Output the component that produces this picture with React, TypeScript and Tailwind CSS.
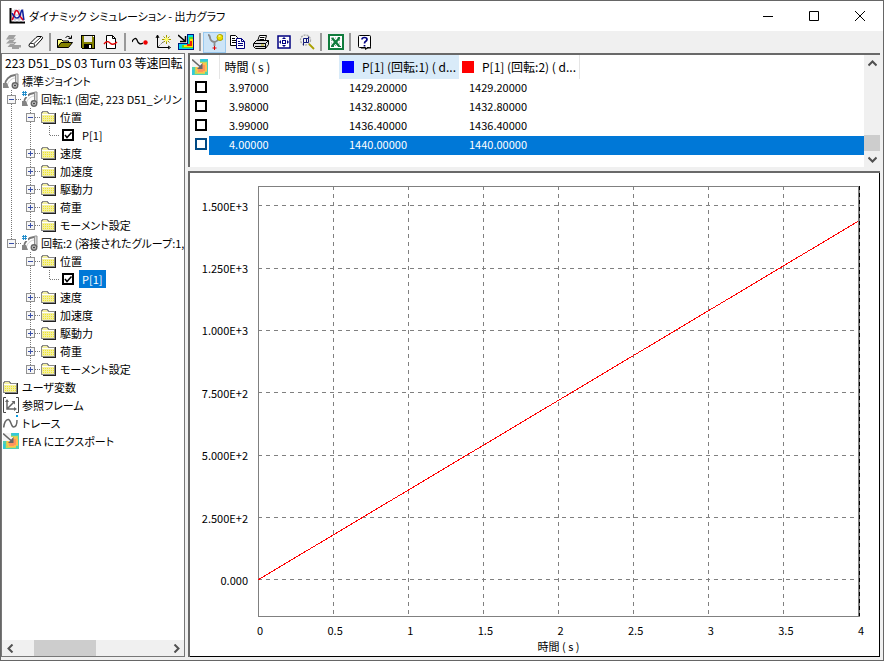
import { useState } from "react";
import type { ReactNode } from "react";
import clsx from "clsx";

type Guide = "none" | "line" | "plus" | "minus" | "plusEnd" | "minusEnd" | "elbow";
type IconName = "folder" | "joint" | "jointHash" | "frame" | "trace" | "fea";

interface TreeRow {
  guides: Guide[];
  icon?: IconName;
  label: string;
  check?: string;
}

const folders = ["速度", "加速度", "駆動力", "荷重"];

const buildJoint = (id: string, label: string, outer: Guide, own: Guide): TreeRow[] => [
  { guides: [own], icon: "jointHash", label },
  { guides: [outer, "minus"], icon: "folder", label: "位置" },
  { guides: [outer, "line", "elbow"], label: "P[1]", check: id },
  ...folders.map((f): TreeRow => ({ guides: [outer, "plus"], icon: "folder", label: f })),
  { guides: [outer, "plusEnd"], icon: "folder", label: "モーメント設定" },
];

const tree: TreeRow[] = [
  { guides: [], icon: "joint", label: "標準ジョイント" },
  ...buildJoint("p1", "回転:1 (固定, 223 D51_シリン", "line", "minus"),
  ...buildJoint("p2", "回転:2 (溶接されたグループ:1,", "none", "minusEnd"),
  { guides: [], icon: "folder", label: "ユーザ変数" },
  { guides: [], icon: "frame", label: "参照フレーム" },
  { guides: [], icon: "trace", label: "トレース" },
  { guides: [], icon: "fea", label: "FEA にエクスポート" },
];

const rows = [
  ["3.97000", "1429.20000", "1429.20000"],
  ["3.98000", "1432.80000", "1432.80000"],
  ["3.99000", "1436.40000", "1436.40000"],
  ["4.00000", "1440.00000", "1440.00000"],
];

const xTicks = ["0", "0.5", "1", "1.5", "2", "2.5", "3", "3.5", "4"];
const yTicks = ["0.000", "2.500E+2", "5.000E+2", "7.500E+2", "1.000E+3", "1.250E+3", "1.500E+3"];

// value -> percentage of the plot height
const yPos = (v: number) => 91.6 - (v / 250) * 14.5;

function Px({ children, w = 16 }: { children: ReactNode; w?: number }) {
  return (
    <svg width={w} height={16} viewBox={`0 0 ${w} 16`} fill="none" className="shrink-0" aria-hidden="true">
      {children}
    </svg>
  );
}

function HeatIcon() {
  return (
    <Px>
      <g shapeRendering="crispEdges">
        <path d="M0 0h16v16H0z" fill="#4fd0b4" />
        <path d="M9 0h7v2H9zM0 11h2v5H0z" fill="#32c8dc" />
        <path d="M6 3h9v10h-2v2H3V8h3z" fill="#c4d85a" />
        <path d="M7 4h7v2h1v6h-2v2H5v-2H4V8h3z" fill="#ffc04a" />
        <path d="M8 6h5v6h-2v1H6V9h2z" fill="#ff945e" />
        <path d="M0 0h8v4h2v5H6V8H0z" fill="#f4f4f4" />
      </g>
      <path d="M0 .5l8 7" stroke="#666" strokeWidth="1.600" />
      <path d="M10.500 10V4L5 10z" fill="#666" />
    </Px>
  );
}

function TreeIcon({ name }: { name: IconName }) {
  if (name === "fea") return <HeatIcon />;
  if (name === "folder")
    return (
      <Px>
        <g shapeRendering="crispEdges">
          <path d="M2 14h12V4h1v11H2z" fill="#222" />
          <path d="M.5 4.500l1-2h5l1 2h6v9H.5z" fill="#f3efa2" stroke="#8a8a8a" />
          <path d="M1 5.500h12" stroke="#fff" />
          <path d="M2 7.500h11M2 9.500h11M2 11.500h11" stroke="#f0e630" strokeDasharray="1 1" />
        </g>
      </Px>
    );
  if (name === "frame")
    return (
      <Px>
        <path d="M3 .5H.5v15H3M13 .5h2.500v15H13" stroke="#444" />
        <path d="M4 3v9h8M4 12l7-7" stroke="#666" strokeWidth="1.500" />
        <path d="M2 5l2-3 2 3zM11 10l3 2-3 2zM8.500 4H12v3.500z" fill="#666" />
      </Px>
    );
  if (name === "trace")
    return (
      <Px>
        <path d="M.7 12.500C1 8 3 4 5.500 4.500S8 12 10.500 12 14 8 14 5" stroke="#666" strokeWidth="1.500" />
        <path d="M13 0h2v2h-2z" fill="#0a9be0" />
      </Px>
    );
  return (
    <Px>
      <path d="M2 12C2 7 6 2.500 12 2" stroke="#777" strokeWidth="1.800" />
      <path d="M4.500 12C5 9 8 5.500 12 5" stroke="#d0d0d0" />
      <path d="M12.500 1h2.500v11h-2.500z" fill="#d8d8d8" stroke="#909090" />
      <path d="M0 10h4l2 5H0z" fill="#858585" />
      <circle cx="12" cy="12.500" r="2.700" fill="#ccc" stroke="#666" strokeWidth="1.500" />
      <path d="M12 11.500v2M11 12.500h2" stroke="#444" />
      {name === "jointHash" && (
        <>
          <path d="M0 0h6v6H0z" fill="#fff" />
          <path d="M1.500 0v5M3.500 0v5M0 1.500h5M0 3.500h5" stroke="#1687c8" strokeWidth="0.900" />
        </>
      )}
    </Px>
  );
}

function GuideCell({ kind }: { kind: Guide }) {
  const box = kind.startsWith("plus") || kind.startsWith("minus");
  const end = kind.endsWith("End") || kind === "elbow";
  const art = (
    <svg width={19} height={18} fill="none" shapeRendering="crispEdges" className="block" aria-hidden="true">
      {kind !== "none" && (
        <path d={end ? "M9.500 0v10" : "M9.500 0v18"} stroke="#777" strokeDasharray="1 1" />
      )}
      {kind !== "none" && kind !== "line" && <path d="M10 9.500h9" stroke="#777" strokeDasharray="1 1" />}
      {box && (
        <>
          <rect x="5.500" y="5.500" width="8" height="8" fill="#f6f6f6" stroke="#919191" />
          <path d="M7 9.500h5" stroke="#3a50a8" />
          {kind.startsWith("plus") && <path d="M9.500 7v5" stroke="#3a50a8" />}
        </>
      )}
    </svg>
  );
  return box ? (
    <button type="button" className="shrink-0" aria-label="展開">
      {art}
    </button>
  ) : (
    <span className="shrink-0">{art}</span>
  );
}

function Check({ id, checked, onChange, light }: { id: string; checked: boolean; onChange: () => void; light?: boolean }) {
  return (
    <span className="relative block size-3 shrink-0">
      <input
        id={id}
        type="checkbox"
        checked={checked}
        onChange={onChange}
        aria-label={id}
        className={clsx("block size-3 appearance-none border-2 bg-white", light ? "border-[#004a84]" : "border-black")}
      />
      {checked && (
        <svg viewBox="0 0 12 12" className="pointer-events-none absolute inset-0 size-3" fill="none">
          <path d="M3 6l2 2.500L9.500 3.500" stroke="#000" strokeWidth="1.500" />
        </svg>
      )}
    </span>
  );
}

const toolGroups: { label: string; art: ReactNode; active?: boolean }[][] = [
  [
    {
      label: "更新",
      art: (
        <Px>
          <path d="M4 1h7L8.500 4.500H11L8 8h3.500L9 11h7v2.500h-2V15H7v-2H2.500l3-3.500H1l4-4H1z" fill="#a0a0a0" />
          <path d="M5 5.500h4M5 9.500h4" stroke="#c8c8c8" />
        </Px>
      ),
    },
    {
      label: "消去",
      art: (
        <Px>
          <path d="M1.500 10L8 3.500q1-1 2-1h3.500q2 .5 .5 2.500l-6 6.500q-1 1.500-2.500 1.500H3q-3 0-1.500-3z" fill="#fff" stroke="#000" />
          <path d="M2 9.500h3q2 0 1.500 3M6 9.500L13 3" stroke="#333" />
        </Px>
      ),
    },
  ],
  [
    {
      label: "開く",
      art: (
        <Px>
          <path d="M.5 13.500v-8h4L6 7h5.500v2" fill="#ffff80" stroke="#000" />
          <path d="M.5 13.500l3.500-5h11.500l-4 5z" fill="#848200" stroke="#000" />
          <path d="M8.500 3.500q2-2.500 5 0M14.500 1.500v3h-3" stroke="#000" />
        </Px>
      ),
    },
    {
      label: "保存",
      art: (
        <Px>
          <g shapeRendering="crispEdges">
            <path d="M1.500 1.500h13v13h-12l-1-1z" fill="#848200" stroke="#000" />
            <path d="M4 2h8v6H4z" fill="#e8e8e8" />
            <path d="M4 10h8v5H4z" fill="#000" />
            <path d="M9 11h2v3H9zM13 2h1v1h-1z" fill="#fff" />
          </g>
        </Px>
      ),
    },
    {
      label: "ページ",
      art: (
        <Px>
          <path d="M3.500 1.500h6l3 3v10h-9z" fill="#fff" stroke="#000" />
          <path d="M9.500 1.500v3h3" stroke="#000" />
          <path d="M1 10q3-4 6-1t7-1" stroke="#e00000" strokeWidth="1.300" />
        </Px>
      ),
    },
  ],
  [
    {
      label: "曲線",
      art: (
        <Px>
          <path d="M0 8c1-3 4-5 5-2s3 5 6 3" stroke="#000" strokeWidth="1.300" />
          <circle cx="13.500" cy="8.500" r="2.200" fill="#f00000" />
        </Px>
      ),
    },
    {
      label: "座標",
      art: (
        <Px>
          <path d="M2.500 2v11.500H14M1 4l1.500-3L4 4M13 12l2.500 1.500L13 15" stroke="#000" />
          <path d="M3 13l6-6" stroke="#444" strokeDasharray="1 1" />
          <path d="M11.500 1v9M7 5.500h9M8.500 2.500l6 6M14.500 2.500l-6 6" stroke="#a09800" />
          <circle cx="11.500" cy="5.500" r="2" fill="#ffff60" />
        </Px>
      ),
    },
    {
      label: "FEA",
      art: (
        <Px>
          <g shapeRendering="crispEdges">
            <path d="M9 0h7v16H0V9h9z" fill="#001880" />
            <path d="M10 1h5v14H1v-5h9z" fill="#00d8e8" />
            <path d="M11 3h4v11H4v-3h7z" fill="#60d820" />
            <path d="M12 5h3v8H6v-2h6z" fill="#ffe000" />
            <path d="M12 7h2v5H9v-2h3z" fill="#f02000" />
          </g>
          <path d="M0 1l7 6M7.500 2v5.500H2" stroke="#000" strokeWidth="1.500" />
        </Px>
      ),
    },
  ],
  [
    {
      label: "連結",
      active: true,
      art: (
        <Px>
          <path d="M1 1q2 0 2 3 1 4 5 4 3-1 4-4M7.500 7v5" stroke="#8a8a8a" strokeWidth="1.800" />
          <circle cx="13" cy="3.500" r="3" fill="#ece000" stroke="#a8a000" />
          <path d="M11.500 2h2" stroke="#fff" />
          <path d="M7.500 12v4M5.500 14h4" stroke="#e00000" />
        </Px>
      ),
    },
    {
      label: "コピー",
      art: (
        <Px>
          <path d="M.5 1.500h5l2 2v8h-7z" fill="#fff" stroke="#000" />
          <path d="M2 4.500h3M2 6.500h4M2 8.500h4" stroke="#000" />
          <path d="M6.500 4.500h5l3 3v7h-8z" fill="#fff" stroke="#000080" />
          <path d="M11.500 4.500v3h3M8 7.500h2M8 9.500h5M8 11.500h5" stroke="#000080" />
        </Px>
      ),
    },
    {
      label: "印刷",
      art: (
        <Px>
          <path d="M4.500 7l2-5.500h7L12 7" fill="#fff" stroke="#000" />
          <path d="M7 3.500h4.500M6.500 5.500H11" stroke="#000" />
          <path d="M.5 9.500l3-3h12v4l-3 4H2.500l-2-2z" fill="#ddd" stroke="#000" />
          <path d="M1 9.500h11.500l3-3M12.500 9.500v5M2 12.500h10" stroke="#000" />
          <path d="M8 11h3" stroke="#c0b800" />
        </Px>
      ),
    },
    {
      label: "全体表示",
      art: (
        <Px>
          <path d="M2 2h12v12H2z" fill="#fff" stroke="#000080" strokeWidth="1.500" />
          <path d="M8 3l2 2H6zM8 13l2-2H6zM3 8l2-2v4zM13 8l-2-2v4z" fill="#000080" />
          <rect x="6.500" y="6.500" width="3" height="3" stroke="#000080" />
        </Px>
      ),
    },
    {
      label: "拡大",
      art: (
        <Px>
          <circle cx="6.500" cy="6" r="5" stroke="#aaa" strokeWidth="1.300" strokeDasharray="2 1" />
          <path d="M4.500 4.500h5v4h-5zM4.500 8.500v3M9.500 4.500v-2M7.500 4.500v4" stroke="#101878" />
          <path d="M10 10l5 5" stroke="#aaa000" strokeWidth="1.800" />
        </Px>
      ),
    },
  ],
  [
    {
      label: "Excel",
      art: (
        <Px>
          <rect x="1" y="1" width="14" height="14" fill="#fff" stroke="#107c3c" strokeWidth="2" />
          <path d="M3 4h10M3 6.500h10M3 9h10M3 11.500h10" stroke="#8aa898" strokeDasharray="1 1" />
          <path d="M4 4l7 8M11.500 4L4 12" stroke="#107c3c" strokeWidth="2.400" />
          <path d="M12 3.500h-2M3 12.500h3M10 12.500h3" stroke="#107c3c" />
        </Px>
      ),
    },
  ],
  [
    {
      label: "ヘルプ",
      art: (
        <Px>
          <path d="M3 2.500h11v12h-3l-2 1v-1H4z" fill="#000" />
          <path d="M1.500 2.500q0-1 1-1h10q1 0 1 1v10q0 1-1 1H10l-1.500 2v-2h-6q-1 0-1-1z" fill="#fff" stroke="#000" />
          <path d="M5 5.500q0-2 2.500-2t2.500 2q0 1-1.500 2-1 .5-1 2M7.500 11v1.500" stroke="#000080" strokeWidth="1.700" />
        </Px>
      ),
    },
  ],
];

function Chevron({ d, label }: { d: string; label: string }) {
  return (
    <button type="button" aria-label={label} className="grid size-4 shrink-0 place-items-center">
      <svg width={9} height={9} viewBox="0 0 9 9" fill="none">
        <path d={d} stroke="#505050" strokeWidth="2" />
      </svg>
    </button>
  );
}

function Chart() {
  return (
    <div className="min-h-0 flex-1 border-r border-b border-black bg-white pt-[13px] pr-5 pb-10 pl-17">
      <svg width="100%" height="100%" className="block overflow-visible text-[11px]" fill="#000">
        <rect width="100%" height="100%" fill="none" stroke="#808080" shapeRendering="crispEdges" />
        {xTicks.map((t, i) => (
          <g key={t}>
            {i > 0 && i < 8 && (
              <line x1={`${i * 12.5}%`} x2={`${i * 12.5}%`} y1="0" y2="100%" stroke="#808080" strokeDasharray="4 4" shapeRendering="crispEdges" />
            )}
            <text x={`${i * 12.5}%`} y="100%" dx="2" dy="19" textAnchor="middle">
              {t}
            </text>
          </g>
        ))}
        {yTicks.map((t, i) => (
          <g key={t}>
            <line x1="0" x2="100%" y1={`${yPos(i * 250)}%`} y2={`${yPos(i * 250)}%`} stroke="#808080" strokeDasharray="4 4" shapeRendering="crispEdges" />
            <text x="0" y={`${yPos(i * 250)}%`} dx="-10" dy="5" textAnchor="end">
              {t}
            </text>
          </g>
        ))}
        <line x1="0" y1={`${yPos(0)}%`} x2="100%" y2={`${yPos(1440)}%`} stroke="#f00" shapeRendering="crispEdges" />
        <line x1="100%" x2="100%" y1="0" y2="100%" stroke="#808080" strokeWidth="2" shapeRendering="crispEdges" />
        <line x1="100%" x2="100%" y1="0" y2="100%" stroke="#000" strokeDasharray="4 3" shapeRendering="crispEdges" />
        <text x="50%" y="100%" dy="35" textAnchor="middle">
          時間 ( s )
        </text>
      </svg>
    </div>
  );
}

export default function App() {
  const [checks, setChecks] = useState<Record<string, boolean>>({ p1: true, p2: true });
  const toggle = (id: string) => setChecks((c) => ({ ...c, [id]: !c[id] }));

  return (
    <div className="flex h-screen flex-col overflow-hidden border border-[#666] bg-[#f0f0f0] font-['Noto_Sans_CJK_JP',sans-serif] text-[11px] text-black [font-feature-settings:'palt']">
      <header className="flex h-[30px] shrink-0 items-center bg-white pl-2">
        <Px>
          <path d="M1.500 0v14.500H16" stroke="#000" strokeWidth="2" />
          <path d="M3 3h12M3 7h12M3 11h12M6 1v13M10 1v13M14 1v13" stroke="#bbc" />
          <path d="M3 12C5 10 5 3 7.500 2.500S10 10 14.500 12" stroke="#e00020" strokeWidth="1.600" />
          <path d="M3 5c2 5 5 6 7 4s2-7 3-7 1 6 2 10" stroke="#1020a0" strokeWidth="1.500" />
        </Px>
        <h1 className="ml-1 flex-1 truncate">ダイナミック シミュレーション - 出力グラフ</h1>
        <div className="flex">
          {[
            { l: "最小化", d: "M0 5.500h10" },
            { l: "最大化", d: "M.5 .5h9v9h-9z" },
            { l: "閉じる", d: "M0 0l10 10M10 0L0 10" },
          ].map((b) => (
            <button key={b.l} type="button" aria-label={b.l} className="grid h-7 w-[46px] place-items-center">
              <svg width={10} height={10} fill="none" className="overflow-visible">
                <path d={b.d} stroke="#000" />
              </svg>
            </button>
          ))}
        </div>
      </header>

      <div className="flex h-[22px] shrink-0 items-center" role="toolbar">
        {toolGroups.map((g, gi) => (
          <div key={gi} className="flex h-full items-center">
            {gi > 0 && <span className="mx-[2px] h-[18px] w-[2px] bg-[#999]" />}
            {g.map((b) => (
              <button
                key={b.label}
                type="button"
                aria-label={b.label}
                className={clsx("grid h-[21px] w-[23px] place-items-center", b.active && "border border-[#99c9ef] bg-[#cce4f7]")}
              >
                {b.art}
              </button>
            ))}
          </div>
        ))}
      </div>

      <main className="flex min-h-0 flex-1 gap-[3px] pr-[3px] pb-[3px]">
        <aside className="flex w-[184px] shrink-0 flex-col border border-[#777] bg-white">
          <div className="min-h-0 flex-1 overflow-hidden whitespace-nowrap">
            <div className="pl-[3px] text-xs leading-[18px]">223 D51_DS 03 Turn 03 等速回転</div>
            <ul>
              {tree.map((r, i) => (
                <li key={i} className="flex h-[18px] items-center leading-[18px]">
                  {r.guides.map((g, gi) => (
                    <GuideCell key={gi} kind={g} />
                  ))}
                  {r.check ? (
                    <>
                      <span className="ml-[3px]">
                        <Check id={r.check} checked={checks[r.check]} onChange={() => toggle(r.check!)} />
                      </span>
                      <label
                        htmlFor={r.check}
                        className={clsx("ml-[5px] px-[3px]", r.check === "p2" && "bg-[#0078d7] text-white")}
                      >
                        {r.label}
                      </label>
                    </>
                  ) : (
                    <>
                      <span className="ml-px">
                        <TreeIcon name={r.icon!} />
                      </span>
                      <span className="ml-[3px]">{r.label}</span>
                    </>
                  )}
                </li>
              ))}
            </ul>
          </div>
          <div className="flex h-4 shrink-0 items-center bg-[#f0f0f0]">
            <Chevron d="M6.500 0.500l-4 4 4 4" label="左へ" />
            <div className="flex h-full flex-1">
              <div className="ml-4 h-full w-[62px] bg-[#cdcdcd]" />
            </div>
            <Chevron d="M2.500 0.500l4 4-4 4" label="右へ" />
          </div>
        </aside>

        <div className="flex min-w-0 flex-1 flex-col gap-1">
          <section className="flex h-[114px] shrink-0 border-t-2 border-l-2 border-[#696969] bg-white">
            <div className="min-w-0 flex-1">
              <table className="w-full table-fixed text-left whitespace-nowrap">
                <colgroup>
                  <col className="w-[19px]" />
                  <col className="w-[10px]" />
                  <col className="w-[120px]" />
                  <col className="w-[120px]" />
                  <col className="w-[120px]" />
                  <col />
                </colgroup>
                <thead className="text-xs">
                  <tr className="h-6">
                    <th colSpan={2} className="p-0 pl-[2px]">
                      <HeatIcon />
                    </th>
                    <th className="border-l border-[#e5e5e5] p-0 pl-[5px] font-normal">時間 ( s )</th>
                    <th className="bg-[#d9ebf9] p-0 pl-[3px] font-normal">
                      <span className="flex items-center gap-2">
                        <i className="size-3 bg-[#0000ff]" />
                        P[1] (回転:1) ( d...
                      </span>
                    </th>
                    <th className="border-r border-[#e5e5e5] p-0 pl-[3px] font-normal">
                      <span className="flex items-center gap-2">
                        <i className="size-3 bg-[#ff0000]" />
                        P[1] (回転:2) ( d...
                      </span>
                    </th>
                    <th />
                  </tr>
                </thead>
                <tbody>
                  {rows.map((r, i) => {
                    const sel = i === 3;
                    const cell = clsx("p-0 pb-[2px]", sel && "bg-[#0078d7] text-white");
                    return (
                      <tr key={r[0]} className="h-[19px]">
                        <td className="p-0 pb-[3px] pl-[5px]">
                          <Check id={`row-${i}`} checked={!!checks[`row-${i}`]} onChange={() => toggle(`row-${i}`)} light={sel} />
                        </td>
                        <td className={cell} />
                        {r.map((v, vi) => (
                          <td key={vi} className={clsx(cell, "pl-[10px]")}>
                            {v}
                          </td>
                        ))}
                        <td className={cell} />
                      </tr>
                    );
                  })}
                </tbody>
              </table>
            </div>
            <div className="flex w-4 flex-col items-center bg-[#f0f0f0]">
              <Chevron d="M0.500 6.500l4-4 4 4" label="上へ" />
              <div className="flex w-full flex-1 flex-col justify-end">
                <div className="h-4 bg-[#cdcdcd]" />
              </div>
              <Chevron d="M0.500 2.500l4 4 4-4" label="下へ" />
            </div>
          </section>
          <section className="flex min-h-0 flex-1 flex-col border-t-2 border-l-2 border-[#696969]">
            <Chart />
          </section>
        </div>
      </main>
    </div>
  );
}
